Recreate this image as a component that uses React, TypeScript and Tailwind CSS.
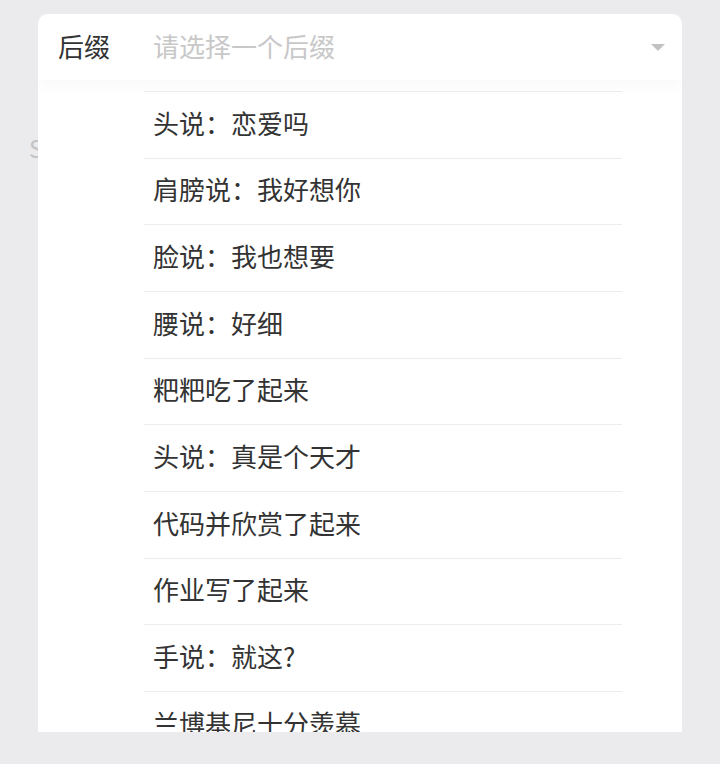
import React from 'react';

const options = [
    '头说：恋爱吗',
    '肩膀说：我好想你',
    '脸说：我也想要',
    '腰说：好细',
    '粑粑吃了起来',
    '头说：真是个天才',
    '代码并欣赏了起来',
    '作业写了起来',
    '手说：就这?',
    '兰博基尼十分羡慕',
];

const App = () => {
    return (
        <div
            className="relative w-[720px] h-[764px] bg-[#ebebed] overflow-hidden"
            style={{ fontFamily: '"Noto Sans CJK SC", "Noto Sans", sans-serif' }}
        >
            {/* page content behind the picker */}
            <div className="absolute left-[29px] top-[130px] text-[24px] text-[#c4c4c6]">S</div>

            <div className="relative ml-[38px] mt-[14px] w-[644px] h-[718px] bg-white rounded-t-[10px] overflow-hidden flex flex-col">
                {/* Header */}
                <div className="relative z-10 h-[66px] shrink-0 flex items-center pl-[20px] pr-[17px] pb-[2px] bg-white shadow-[0_8px_14px_rgba(0,0,0,0.025)]">
                    <span className="w-[95px] text-[26px] leading-none text-[#333]">后缀</span>
                    <span className="flex-1 text-[26px] leading-none text-[#c8c8c8]">请选择一个后缀</span>
                    <svg width="14" height="8" viewBox="0 0 14 8" className="mt-[4px]">
                        <path d="M0 0 H14 L7 7 Z" fill="#c2c2c2" />
                    </svg>
                </div>

                {/* Options */}
                <div className="ml-[106px] w-[478px] mt-[11px]">
                    {options.map((o) => (
                        <div
                            key={o}
                            className="h-[66.67px] flex items-center pl-[9px] pb-[4px] border-t border-[#ececec] text-[26px] leading-none text-[#333]"
                        >
                            {o}
                        </div>
                    ))}
                </div>
            </div>
        </div>
    );
};

export default App;
